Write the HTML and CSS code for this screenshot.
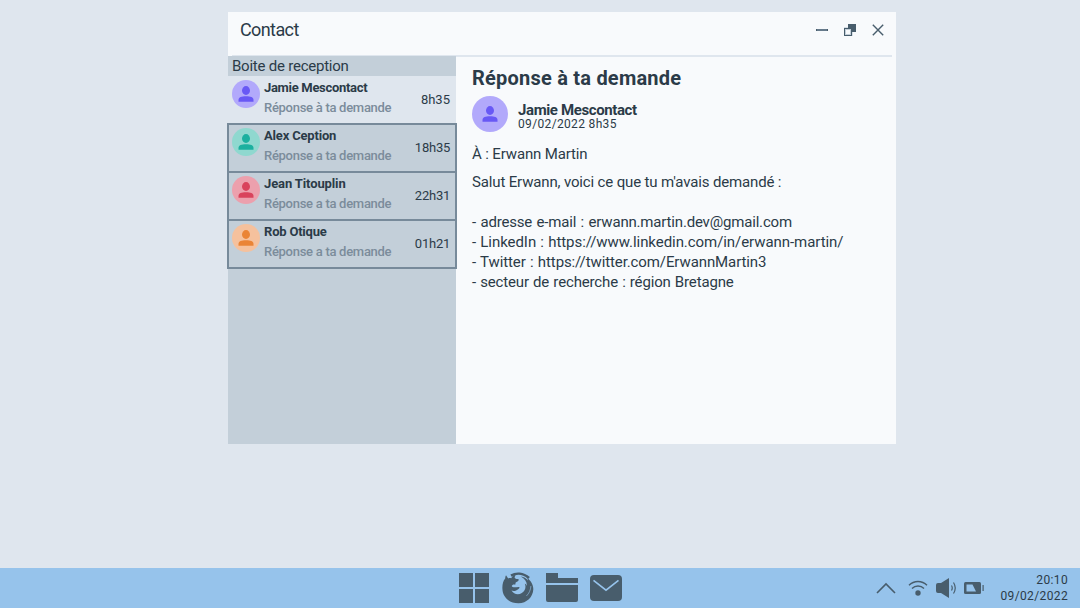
FILE: index.html
```html
<!DOCTYPE html>
<html lang="fr">
<head>
<meta charset="utf-8">
<title>Contact</title>
<link rel="stylesheet" href="styles.css">
</head>
<body>
<svg class="defs" width="0" height="0">
  <symbol id="person" viewBox="0 0 16 16"><ellipse cx="8" cy="4.5" rx="4" ry="4.400"/><path d="M.5 15.800v-1.900C.5 11.300 3.500 10.300 8 10.300s7.500 1 7.500 3.600v1.900z"/></symbol>
</svg>
<main class="desktop">
  <section class="window">
    <header class="titlebar">
      <h1 class="title"><span>Contact</span></h1>
      <div class="controls">
        <svg width="12" height="12" viewBox="0 0 12 12"><path d="M0 5h12v2H0z" fill="#667a8b"/><path d="M0 5h1v2H0zM11 5h1v2h-1z"/></svg>
        <svg width="12" height="12" viewBox="0 0 12 12"><path d="M0 3h9v9H0z" fill="#d5dee6"/><path d="M4 0h8v8H4z"/><path d="M0 4h8v8H0z"/><path d="M1 5h6v6H1z" fill="#c3cfd9"/><path d="M2 6h4v4H2z" fill="#f8fafc"/></svg>
        <svg width="12" height="12" viewBox="0 0 12 12"><path d="M.8.8l10.400 10.400M11.200.8L.8 11.200" stroke="#485d6c" stroke-width="1.400"/></svg>
      </div>
    </header>
    <div class="body">
      <aside class="sidebar">
        <h2 class="inbox"><span>Boite de reception</span></h2>
        <ul class="list">
          <li class="mail selected">
            <div class="avatar violet"><svg><use href="#person"/></svg></div>
            <div class="info"><strong class="n1">Jamie Mescontact</strong><span class="subject">Réponse à ta demande</span></div>
            <time>8h35</time>
          </li>
          <li class="mail">
            <div class="avatar teal"><svg><use href="#person"/></svg></div>
            <div class="info"><strong class="n2">Alex Ception</strong><span class="subject">Réponse a ta demande</span></div>
            <time>18h35</time>
          </li>
          <li class="mail">
            <div class="avatar red"><svg><use href="#person"/></svg></div>
            <div class="info"><strong class="n3">Jean Titouplin</strong><span class="subject">Réponse a ta demande</span></div>
            <time>22h31</time>
          </li>
          <li class="mail">
            <div class="avatar orange"><svg><use href="#person"/></svg></div>
            <div class="info"><strong class="n4">Rob Otique</strong><span class="subject">Réponse a ta demande</span></div>
            <time>01h21</time>
          </li>
        </ul>
      </aside>
      <article class="message">
        <h2 class="heading"><span>Réponse à ta demande</span></h2>
        <div class="sender">
          <div class="avatar large violet"><svg><use href="#person"/></svg></div>
          <div class="who"><strong>Jamie Mescontact</strong><span>09/02/2022 8h35</span></div>
        </div>
        <p class="to">À : Erwann Martin</p>
        <div class="text">
          <p class="l1">Salut Erwann, voici ce que tu m'avais demandé :</p>
          <p>&nbsp;</p>
          <p class="l2">- adresse e-mail : erwann.martin.dev@gmail.com</p>
          <p class="l3">- LinkedIn : https://www.linkedin.com/in/erwann-martin/</p>
          <p class="l4">- Twitter : https://twitter.com/ErwannMartin3</p>
          <p class="l5">- secteur de recherche : région Bretagne</p>
        </div>
      </article>
    </div>
  </section>
</main>
<footer class="taskbar">
  <nav class="apps">
    <svg width="32" height="32" viewBox="0 0 32 32"><path d="M1 1h14v14H1zM17 1h14v14H17zM1 17h14v14H1zM17 17h14v14H17z"/></svg>
    <svg width="32" height="32" viewBox="0 0 32 32"><path d="M4 3.200l2.200 3.200c1-.4 2-.4 3-.2C10.500 4 12 3 14 2.600c-1 1.200-1.500 2.400-1.300 3.400.8 1 2.400 1 4 1.200.2 1.500-1 2.300-3 3.300l-.5 2.200c-1.600-.6-3 0-3.500 1.300 1.300 2.300 4.800.8 7.300.9 1 .4.500 1.500-.5 2-2 1.600-4.500 2.700-7 1.600 2 3.800 7 4.800 10.300 2.500 3.500-2.300 4.500-6 3-9.300 1 .4 1.600 1.200 2 2 .3-4-2-7-6-9.300 3 .3 5.500 1.800 7.200 4.200-.1-1-.4-1.800-1-2.600 4.200 2.800 6.500 7.200 6.300 11.500-.4 7.600-6.500 13.700-14.800 13.700C7 31.200.6 25 .4 16.800.2 12.500 1 9 3.200 6.500 3.200 5.200 3.400 4.200 4 3.200z"/><path d="M9 3.600C14 .8 21 .8 27 6" fill="none" stroke="#485d6c" stroke-width="2.600"/><path d="M28.900 14c-.2 4-1.900 7.500-4.500 10" fill="none" stroke="#96c3eb" stroke-width=".6"/></svg>
    <svg width="32" height="32" viewBox="0 0 32 32"><path d="M0 1h12v5h20v5H0zM0 13h32v15q0 2-2 2H2q-2 0-2-2z"/></svg>
    <svg width="32" height="32" viewBox="0 0 32 32"><rect y="3" width="32" height="26" rx="4"/><path d="M3.500 8.300L16 18.200l12.500-9.900" fill="none" stroke="#96c3eb" stroke-width="1.600"/></svg>
  </nav>
  <div class="tray">
    <svg class="chevron" width="20" height="20" viewBox="0 0 20 20"><path d="M1 15l9-9 9 9" fill="none" stroke="#485d6c" stroke-width="1.600"/></svg>
    <svg width="20" height="20" viewBox="0 0 20 20"><g fill="none" stroke="#485d6c" stroke-width="1.400"><path d="M1 7.300c5-5 13-5 18 0M4 10.500c3.300-3.400 8.700-3.400 12 0"/></g><circle cx="10" cy="15" r="2.700"/></svg>
    <svg width="20" height="20" viewBox="0 0 20 20"><path d="M2 5h3l8-5v20l-8-5H2q-2 0-2-2V7q0-2 2-2z"/><path d="M15.500 7.500q1.500 2.500 0 5M17.500 4.500q3.500 5.500 0 11" fill="none" stroke="#485d6c" stroke-width="1.200"/></svg>
    <svg width="20" height="20" viewBox="0 0 20 20"><rect y="4" width="17" height="12" rx="1.500"/><path d="M2.500 6.500h6l3.500 7H2.500z" fill="#96c3eb"/><path d="M18.500 7h1.200v6h-1.200z"/></svg>
  </div>
  <div class="clock"><span class="hour">20:10</span><span class="date">09/02/2022</span></div>
</footer>
</body>
</html>
```
FILE: styles.css
```css
* { box-sizing: border-box; margin: 0; padding: 0; }
body { width: 1080px; height: 608px; display: flex; flex-direction: column; background: #dfe6ee; color: #2b3b48; font: 15px/20px Roboto, "Liberation Sans", sans-serif; overflow: hidden; }
.defs { position: absolute; }
svg { display: block; fill: #485d6c; }
h1, h2 { font-weight: 400; }
ul { list-style: none; }
.desktop { flex: 1; padding: 12px 0 0 228px; }
.window { width: 668px; height: 432px; background: #f8fafc; display: flex; flex-direction: column; }
.titlebar { height: 44px; margin: 0 4px; padding: 0 8px; display: flex; justify-content: space-between; box-shadow: inset 0 -1px #dfe6ee, 0 1px #dfe6ee; }
.title { font-size: 18px; line-height: 36px; letter-spacing: -.6px; }
.controls { display: flex; gap: 16px; padding: 12px 0 0; }
.body { flex: 1; display: flex; }
.sidebar { width: 228px; background: #c3cfd9; position: relative; }
.inbox { height: 20px; padding-left: 4px; font-size: 15px; line-height: 20px; letter-spacing: -.23px; }
.mail { height: 48px; padding: 4px 6px 0 4px; display: flex; gap: 4px; outline: 2px solid #778a9a; outline-offset: -1px; }
.mail.selected { background: #dfe6ee; outline: none; }
.mail:not(.selected) { outline-offset: -1px; }
.avatar { width: 28px; height: 28px; border-radius: 50%; display: flex; align-items: center; justify-content: center; }
.avatar svg { width: 16px; height: 16px; fill: inherit; }
.avatar.large { width: 36px; height: 36px; }
.violet { background: #b2a9fb; fill: #6858f5; }
.teal { background: #8fd8cf; fill: #1bb09f; }
.red { background: #eca0ad; fill: #d9435c; }
.orange { background: #f5c19d; fill: #ea8436; }
.info { flex: 1; display: flex; flex-direction: column; align-items: flex-start; font-size: 13px; line-height: 20px; margin-top: -2px; white-space: nowrap; }
.n1 { letter-spacing: -.31px; }
.n2 { letter-spacing: -.18px; }
.n3 { letter-spacing: -.12px; }
.n4 { letter-spacing: -.2px; }
.subject { color: #7b8c9b; font-weight: 500; letter-spacing: -.28px; }
.mail time { font-size: 13px; line-height: 20px; padding-top: 10px; letter-spacing: -.25px; }
.mail.selected time { letter-spacing: 0; }
.message { flex: 1; padding: 10px 16px; white-space: nowrap; }
.heading { font-size: 20px; font-weight: 700; line-height: 24px; letter-spacing: .22px; }
.sender { display: flex; gap: 10px; margin-top: 6px; height: 36px; }
.who { display: flex; flex-direction: column; align-items: flex-start; line-height: 14px; padding-top: 7px; letter-spacing: -.38px; }
.who span { font-size: 12px; letter-spacing: .34px; }
.to { margin-top: 12px; letter-spacing: -.14px; }
.text { margin-top: 8px; }
.l1 { letter-spacing: -.15px; }
.l2 { letter-spacing: -.18px; word-spacing: .9px; }
.l3 { letter-spacing: -.06px; word-spacing: .6px; }
.l4 { letter-spacing: -.1px; word-spacing: .7px; }
.l5 { letter-spacing: -.15px; word-spacing: .6px; }
.taskbar { height: 40px; background: #96c3eb; display: flex; align-items: flex-start; }
.apps { display: flex; gap: 12px; padding: 4px 0 0 458px; }
.tray { display: flex; gap: 8px; padding: 10px 0 0 254px; }
.chevron { margin-right: 4px; }
.clock { flex: 1; padding: 4px 12px 0 0; display: flex; flex-direction: column; align-items: flex-end; font-size: 12px; line-height: 16px; letter-spacing: .37px; }
```
